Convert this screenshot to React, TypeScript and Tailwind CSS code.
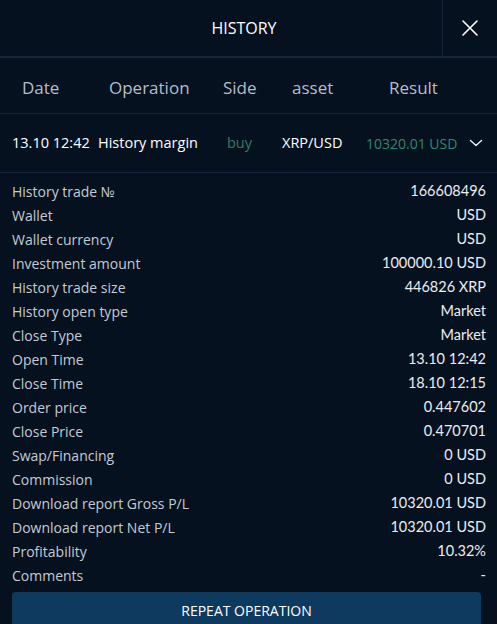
import React from 'react';

const details: [string, string][] = [
  ['History trade №', '166608496'],
  ['Wallet', 'USD'],
  ['Wallet currency', 'USD'],
  ['Investment amount', '100000.10 USD'],
  ['History trade size', '446826 XRP'],
  ['History open type', 'Market'],
  ['Close Type', 'Market'],
  ['Open Time', '13.10 12:42'],
  ['Close Time', '18.10 12:15'],
  ['Order price', '0.447602'],
  ['Close Price', '0.470701'],
  ['Swap/Financing', '0 USD'],
  ['Commission', '0 USD'],
  ['Download report Gross P/L', '10320.01 USD'],
  ['Download report Net P/L', '10320.01 USD'],
  ['Profitability', '10.32%'],
  ['Comments', '-'],
];

const App: React.FC = () => {
  return (
    <div className="h-[624px] w-[497px] overflow-hidden bg-[#06111f] font-['Open_Sans',sans-serif]">
      {/* Title bar */}
      <div className="flex h-[58px] border-b-2 border-[#15253a]">
        <div className="flex flex-1 items-center justify-center pl-[46px] text-[16px] font-medium text-white">HISTORY</div>
        <button className="flex w-[55px] items-center justify-center border-l border-[#15253a] text-white">
          <svg width="18" height="18" viewBox="0 0 18 18" fill="none" stroke="currentColor" strokeWidth="1.6" strokeLinecap="round">
            <path d="M2 2L16 16M16 2L2 16" />
          </svg>
        </button>
      </div>

      {/* Column headings */}
      <div className="flex h-[56px] items-center border-b border-[#15253a] pl-[22px] pt-[4px] text-[17px] text-[#b4bec9]">
        <div className="w-[87px]">Date</div>
        <div className="w-[114px]">Operation</div>
        <div className="w-[69px]">Side</div>
        <div className="w-[97px]">asset</div>
        <div>Result</div>
      </div>

      {/* Trade row */}
      <div className="flex h-[59px] items-center border-b border-[#15253a] pl-[12px] text-[14.5px] text-white">
        <div className="w-[86px]">13.10 12:42</div>
        <div className="w-[129px]">History margin</div>
        <div className="w-[55px] text-[#2f7d62]">buy</div>
        <div className="w-[84px]">XRP/USD</div>
        <div className="flex-1 text-[14px] text-[#2e8a6c]">10320.01 USD</div>
        <svg className="mr-[14px]" width="14" height="14" viewBox="0 0 14 14" fill="none" stroke="#e6ebf0" strokeWidth="1.5" strokeLinecap="round" strokeLinejoin="round">
          <path d="M1.5 4.5L7 9.5L12.5 4.5" />
        </svg>
      </div>

      {/* Details */}
      <div className="pl-[12px] pr-[11px] pt-[6px]">
        {details.map(([label, value]) => (
          <div key={label} className="flex h-[24px] items-center justify-between">
            <span className="text-[14px] text-[#c3cbd4]">{label}</span>
            <span className="font-['Lato',sans-serif] text-[14.5px] text-[#e9edf1]">{value}</span>
          </div>
        ))}
        <button className="mt-[5px] h-[44px] w-[469px] rounded-t-[4px] bg-[#0d3a5e] pb-[8px] text-[14px] text-white">
          REPEAT OPERATION
        </button>
      </div>
    </div>
  );
};

export default App;
